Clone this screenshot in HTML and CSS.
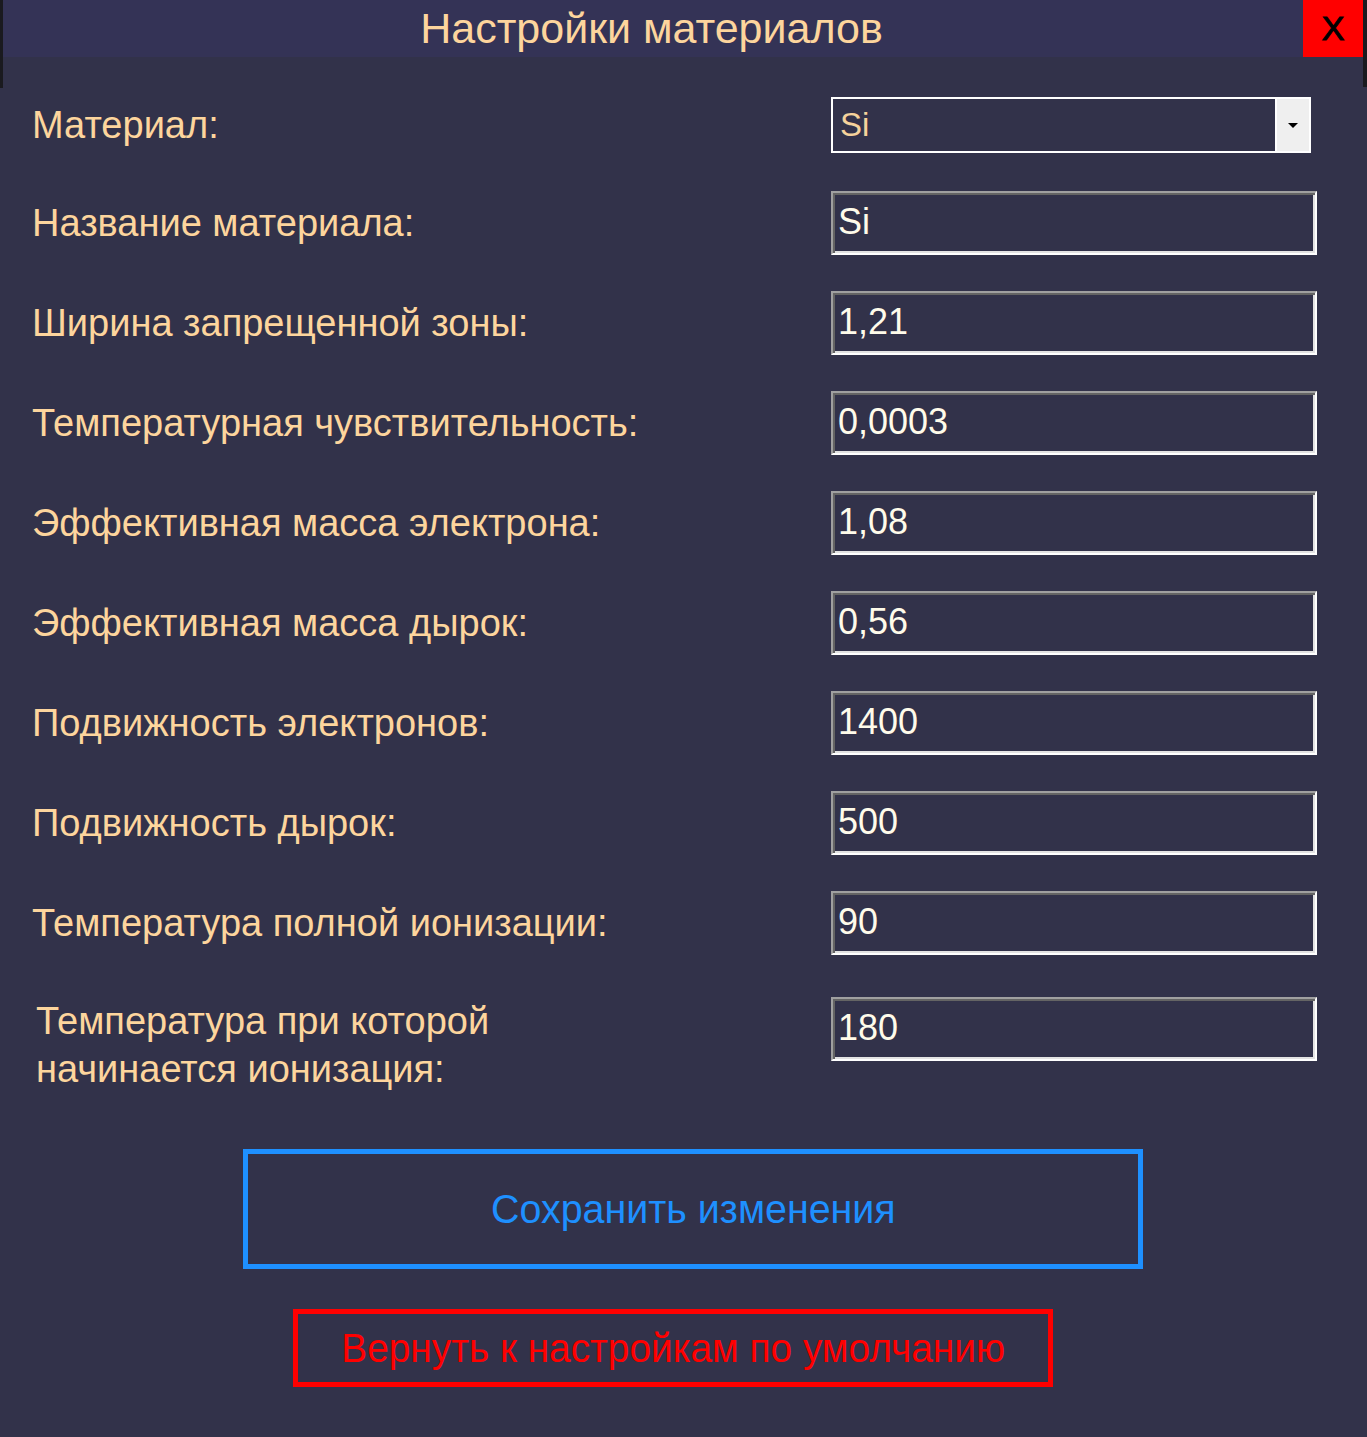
FILE: index.html
```html
<!DOCTYPE html>
<html lang="ru">
<head>
<meta charset="utf-8">
<title>Настройки материалов</title>
<link rel="stylesheet" href="styles.css">
</head>
<body>
<div class="window">
  <div class="titlebar">
    <div class="title">Настройки материалов</div>
    <div class="close">X</div>
  </div>
  <div class="edge-right"></div>
  <div class="edge-left"></div>
  <div class="form">
    <div class="row row-select">
      <div class="label">Материал:</div>
      <div class="select">
        <div class="select-value">Si</div>
        <div class="select-btn"><span class="arrow"></span></div>
      </div>
    </div>
    <div class="row">
      <div class="label">Название материала:</div>
      <div class="field">Si</div>
    </div>
    <div class="row">
      <div class="label">Ширина запрещенной зоны:</div>
      <div class="field">1,21</div>
    </div>
    <div class="row">
      <div class="label">Температурная чувствительность:</div>
      <div class="field">0,0003</div>
    </div>
    <div class="row">
      <div class="label">Эффективная масса электрона:</div>
      <div class="field">1,08</div>
    </div>
    <div class="row">
      <div class="label">Эффективная масса дырок:</div>
      <div class="field">0,56</div>
    </div>
    <div class="row">
      <div class="label">Подвижность электронов:</div>
      <div class="field">1400</div>
    </div>
    <div class="row">
      <div class="label">Подвижность дырок:</div>
      <div class="field">500</div>
    </div>
    <div class="row">
      <div class="label">Температура полной ионизации:</div>
      <div class="field">90</div>
    </div>
    <div class="row row-last">
      <div class="label label-multi">Температура при которой<br>начинается ионизация:</div>
      <div class="field">180</div>
    </div>
  </div>
  <div class="actions">
    <div class="btn btn-save"><span class="btn-text">Сохранить изменения</span></div>
    <div class="btn btn-reset"><span class="btn-text btn-text-reset">Вернуть к настройкам по умолчанию</span></div>
  </div>
</div>
</body>
</html>
```
FILE: styles.css
```css
html, body {
  margin: 0;
  padding: 0;
  background: #32324a;
}
.window {
  position: relative;
  width: 1367px;
  height: 1437px;
  background: #32324a;
  overflow: hidden;
  font-family: "Liberation Sans", Arial, sans-serif;
}
.titlebar {
  display: flex;
  height: 57px;
  background: #343356;
  padding-right: 4px;
}
.title {
  flex: 1;
  text-align: center;
  line-height: 57px;
  font-size: 43px;
  color: #fdd59d;
}
.close {
  width: 60px;
  background: #ff0000;
  color: #000;
  font-size: 34px;
  line-height: 57px;
  text-align: center;
  -webkit-text-stroke: 1px #000;
}
.edge-right {
  position: absolute;
  right: 0;
  top: 0;
  width: 4px;
  height: 87px;
  background: #1a1a1f;
}
.edge-left {
  position: absolute;
  left: 0;
  top: 0;
  width: 3px;
  height: 88px;
  background: #1a1a1f;
}
.form {
  display: flex;
  flex-direction: column;
  padding: 40px 0 0 32px;
  gap: 36px;
}
.row {
  display: flex;
  align-items: center;
  height: 64px;
}
.row-select {
  height: 56px;
  margin-bottom: 2px;
}
.row-last {
  align-items: flex-start;
  margin-top: 6px;
}
.label {
  width: 799px;
  font-size: 38px;
  color: #fdd59d;
  white-space: nowrap;
}
.label-multi {
  padding-left: 4px;
  width: 795px;
  line-height: 48px;
}
.select {
  display: flex;
  box-sizing: border-box;
  width: 480px;
  height: 56px;
  border: 2px solid #ffffff;
  background: #32324a;
}
.select-value {
  flex: 1;
  font-size: 33px;
  color: #f5d29c;
  line-height: 52px;
  padding-left: 7px;
  border-right: 2px solid #ffffff;
}
.select-btn {
  width: 32px;
  background: #efefef;
  display: flex;
  align-items: center;
  justify-content: center;
}
.arrow {
  width: 0;
  height: 0;
  border-left: 5px solid transparent;
  border-right: 5px solid transparent;
  border-top: 5px solid #000;
}
.field {
  box-sizing: border-box;
  width: 486px;
  height: 64px;
  border: 2px solid;
  border-color: #a0a0a0 #ffffff #ffffff #a0a0a0;
  box-shadow: inset 2px 2px 0 #646464, inset -2px -2px 0 #e3e3e3;
  padding-left: 5px;
  font-size: 36px;
  line-height: 58px;
  color: #fffbea;
}
.actions {
  display: flex;
  flex-direction: column;
  align-items: flex-start;
  margin-top: 88px;
  gap: 40px;
}
.btn {
  box-sizing: border-box;
  display: flex;
  align-items: center;
  justify-content: center;
  border: 5px solid;
  white-space: nowrap;
}
.btn-text {
  display: inline-block;
  font-size: 40px;
  transform: scaleX(0.985);
}
.btn-text-reset {
  transform: scaleX(0.97);
}
.btn-save {
  width: 900px;
  height: 120px;
  margin-left: 243px;
  border-color: #1e90ff;
  color: #1e90ff;
}
.btn-reset {
  width: 760px;
  height: 78px;
  margin-left: 293px;
  border-color: #ff0000;
  color: #ff0000;
}
```
